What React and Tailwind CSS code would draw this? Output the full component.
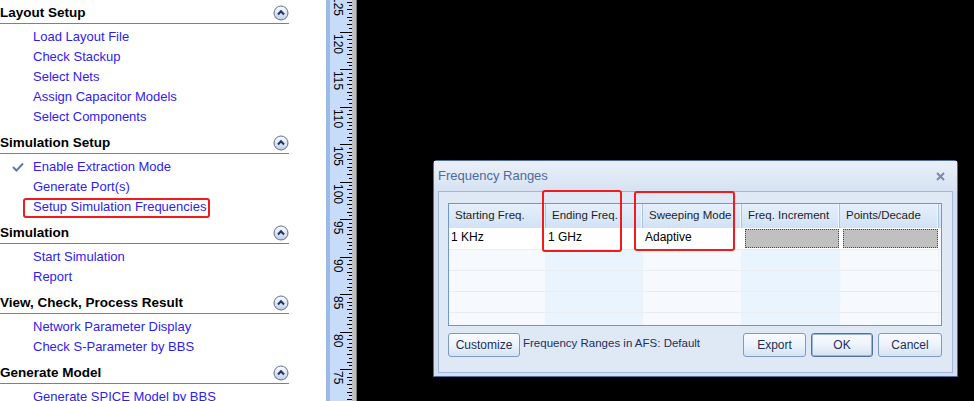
import React from 'react';

const sections = [
  { title: 'Layout Setup', items: [{ label: 'Load Layout File' }, { label: 'Check Stackup' }, { label: 'Select Nets' }, { label: 'Assign Capacitor Models' }, { label: 'Select Components' }] },
  { title: 'Simulation Setup', items: [{ label: 'Enable Extraction Mode', checked: true }, { label: 'Generate Port(s)' }, { label: 'Setup Simulation Frequencies', marked: true }] },
  { title: 'Simulation', items: [{ label: 'Start Simulation' }, { label: 'Report' }] },
  { title: 'View, Check, Process Result', items: [{ label: 'Network Parameter Display' }, { label: 'Check S-Parameter by BBS' }] },
  { title: 'Generate Model', items: [{ label: 'Generate SPICE Model by BBS' }] },
];

const columns = [
  { title: 'Starting Freq.', w: 'w-[97px]', value: '1 KHz', shade: false },
  { title: 'Ending Freq.', w: 'w-[97px]', value: '1 GHz', shade: true },
  { title: 'Sweeping Mode', w: 'w-[99px]', value: 'Adaptive', shade: false },
  { title: 'Freq. Increment', w: 'w-[98px]', value: null, shade: true },
  { title: 'Points/Decade', w: 'w-[99px]', value: null, shade: false },
];

const CollapseIcon = () => (
  <svg width="16" height="16" viewBox="0 0 16 16">
    <defs>
      <linearGradient id="collapse-bg" x1="0" y1="0" x2="0" y2="1">
        <stop offset="0" stopColor="#ffffff" />
        <stop offset="1" stopColor="#bfcfe6" />
      </linearGradient>
    </defs>
    <circle cx="8" cy="8" r="7" fill="url(#collapse-bg)" stroke="#5f6f88" strokeWidth="1" />
    <path d="M5 9.5 L8 6.3 L11 9.5" fill="none" stroke="#1b356a" strokeWidth="2" />
  </svg>
);

const CheckIcon = () => (
  <svg width="12" height="10" viewBox="0 0 12 10" className="absolute left-[12px] top-[5px]">
    <path d="M1 5 L4.5 8.5 L11 1.5" fill="none" stroke="#5b7db5" strokeWidth="2" />
  </svg>
);

const Ruler = () => {
  const ticks = [];
  const labels = [];
  for (let j = 0; j < 112; j++) {
    const y = -6 + j * 3.75;
    const len = j % 10 === 0 ? 12 : j % 2 === 0 ? 5 : 3;
    ticks.push(<rect key={j} x={26 - len} y={Math.round(y)} width={len} height="1" fill="#000" />);
    if (j % 10 === 0) {
      const v = 125 - (j / 10) * 5;
      labels.push(
        <text key={v} transform={`translate(8 ${Math.round(y) + 2}) rotate(90)`} fontSize="12" fontFamily="'Liberation Sans', Arial, sans-serif" fill="#000">
          {v}
        </text>
      );
    }
  }
  return (
    <svg width="31" height="401" viewBox="0 0 31 401" className="shrink-0 block">
      <rect x="0" y="0" width="4" height="401" fill="#9bbae6" />
      <rect x="4" y="0" width="22" height="401" fill="#c6dcf8" />
      <rect x="26" y="0" width="4" height="401" fill="#bdbdbd" />
      <rect x="30" y="0" width="1" height="401" fill="#7a7a7a" />
      {ticks}
      {labels}
    </svg>
  );
};

const Button = ({ children, className = '', primary = false }) => (
  <button
    type="button"
    className={`h-[24px] rounded-[3px] border bg-gradient-to-b from-[#f8fbff] via-[#edf3fb] to-[#d5e2f3] text-[12px] text-[#1c2f5c] ${
      primary ? 'border-[#56719c] shadow-[inset_0_0_0_1px_#9cb4d6]' : 'border-[#7f9bc4]'
    } ${className}`}
  >
    {children}
  </button>
);

export default function App() {
  return (
    <div className="flex h-[401px] w-[974px] overflow-hidden bg-black font-['Liberation_Sans',Arial,sans-serif]">
      <div className="w-[326px] shrink-0 bg-white">
        <div className="-mt-[3px] w-[289px]">
          {sections.map((section) => (
            <div key={section.title}>
              <div className="flex h-[27px] items-start justify-between border-b border-[#808080] pt-[6px]">
                <span className="text-[13.5px] font-bold leading-[20px] text-black">{section.title}</span>
                <span className="mt-[2px]">
                  <CollapseIcon />
                </span>
              </div>
              <div className="pt-[3px]">
                {section.items.map((item) => (
                  <div key={item.label} className="relative h-[20px] pl-[33px] text-[13px] leading-[20px] text-[#2e1cf0]">
                    {item.checked ? <CheckIcon /> : null}
                    {item.label}
                    {item.marked ? (
                      <span className="absolute left-[23px] top-[1px] h-[20px] w-[187px] rounded-[3px] border-2 border-[#f21b1b]" />
                    ) : null}
                  </div>
                ))}
              </div>
            </div>
          ))}
        </div>
      </div>

      <Ruler />

      <div className="flex-1 pl-[76px] pt-[160px]">
        <div className="relative flex h-[217px] w-[525px] flex-col rounded-t-[4px] border border-[#4f6c9a] bg-[#d3dff0]">
          <div className="flex h-[30px] items-center justify-between bg-gradient-to-b from-[#eaf0f9] to-[#d6e2f2] pl-[4px] pr-[12px]">
            <span className="text-[13px] text-[#4d6a9c]">Frequency Ranges</span>
            <svg width="9" height="9" viewBox="0 0 9 9">
              <path d="M1 1 L8 8 M8 1 L1 8" stroke="#7a8ba6" strokeWidth="2" />
            </svg>
          </div>
          <div className="mx-[4px] mb-[3px] flex-1 border border-[#a2b8d6] bg-[#dfe8f5] pl-[9px] pt-[11px]">
            <div className="h-[123px] w-[494px] overflow-hidden border border-[#7196ca] bg-[#f6f9fe]">
              <div className="flex h-[24px] bg-gradient-to-b from-[#e6effb] to-[#d1e2f7]">
                {columns.map((c) => (
                  <div key={c.title} className={`${c.w} flex items-center border-r border-[#a9c2e5] pl-[6px] text-[11.5px] text-[#1e1e1e] shadow-[inset_-1px_0_0_#f3f8ff]`}>
                    {c.title}
                  </div>
                ))}
              </div>
              <div className="flex h-[21px]">
                {columns.map((c) =>
                  c.value ? (
                    <div key={c.title} className={`${c.w} bg-white pl-[2px] text-[12px] leading-[19px] text-black`}>
                      {c.value}
                    </div>
                  ) : (
                    <div key={c.title} className={`${c.w} bg-white py-[1px] pl-[3px] pr-[1px]`}>
                      <div className="h-full w-full border border-dotted border-[#4a4a4a] bg-[#c0c0c0]" />
                    </div>
                  )
                )}
              </div>
              {[0, 1, 2, 3].map((r) => (
                <div key={r} className="flex h-[21px] border-t border-[#e9edf2]">
                  {columns.map((c) => (
                    <div key={c.title} className={`${c.w} ${c.shade ? 'bg-[#eaf4fe]' : 'bg-[#f6f9fe]'} border-r border-[#f0f2f5]`} />
                  ))}
                </div>
              ))}
            </div>
            <div className="mt-[7px] flex w-[494px] items-center">
              <Button className="w-[72px]">Customize</Button>
              <span className="-mt-[2px] ml-[3px] text-[11.5px] text-[#1e2f5e]">Frequency Ranges in AFS: Default</span>
              <Button className="ml-auto w-[63px]">Export</Button>
              <Button primary className="ml-[5px] w-[62px]">OK</Button>
              <Button className="ml-[5px] w-[64px]">Cancel</Button>
            </div>
          </div>
          <span className="absolute left-[108px] top-[29px] h-[62px] w-[80px] rounded-[3px] border-2 border-[#f21b1b]" />
          <span className="absolute left-[200px] top-[30px] h-[60px] w-[101px] rounded-[3px] border-2 border-[#f21b1b]" />
        </div>
      </div>
    </div>
  );
}
